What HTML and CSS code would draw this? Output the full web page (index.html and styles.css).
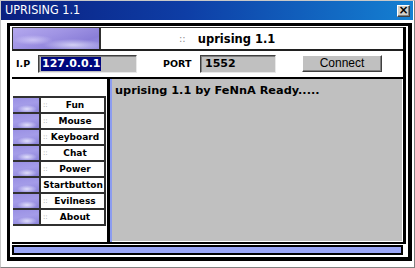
FILE: index.html
```html
<!DOCTYPE html>
<html>
<head>
<meta charset="utf-8">
<link rel="stylesheet" href="styles.css">
</head>
<body>
<div class="window">
  <div class="titlebar">
    <span class="title">UPRISING 1.1</span>
    <span class="close">×</span>
  </div>
  <div class="client">
    <div class="frame">
      <div class="content">
        <div class="header">
          <div class="logo"></div>
          <div class="htitle"><span class="dots">::</span><span class="hname">uprising 1.1</span></div>
        </div>
        <div class="connrow">
          <span class="lbl ip-lbl">I.P</span>
          <div class="field ip-field"><span class="sel">127.0.0.1</span></div>
          <span class="lbl port-lbl">PORT</span>
          <div class="field port-field">1552</div>
          <div class="btn">Connect</div>
        </div>
        <div class="body">
          <div class="menu">
            <div class="mlist">
              <div class="mrow"><div class="mimg"></div><div class="mlabel"><span class="mdots">::</span><span class="mname">Fun</span></div></div>
              <div class="mrow"><div class="mimg"></div><div class="mlabel"><span class="mdots">::</span><span class="mname">Mouse</span></div></div>
              <div class="mrow"><div class="mimg"></div><div class="mlabel"><span class="mdots">::</span><span class="mname">Keyboard</span></div></div>
              <div class="mrow"><div class="mimg"></div><div class="mlabel"><span class="mdots">::</span><span class="mname">Chat</span></div></div>
              <div class="mrow"><div class="mimg"></div><div class="mlabel"><span class="mdots">::</span><span class="mname">Power</span></div></div>
              <div class="mrow"><div class="mimg"></div><div class="mlabel"><span class="mname full">Startbutton</span></div></div>
              <div class="mrow"><div class="mimg"></div><div class="mlabel"><span class="mdots">::</span><span class="mname">Evilness</span></div></div>
              <div class="mrow"><div class="mimg"></div><div class="mlabel"><span class="mdots">::</span><span class="mname">About</span></div></div>
            </div>
          </div>
          <div class="log">uprising 1.1 by FeNnA Ready.....</div>
        </div>
      </div>
      <div class="status"><div class="statusfill"></div></div>
    </div>
  </div>
</div>
</body>
</html>
```

FILE: styles.css
```css
* { box-sizing: border-box; }
html, body { margin: 0; padding: 0; background: #ffffff; }

.window {
  width: 415px;
  height: 268px;
  border: 1px solid;
  border-color: #c8c8c8 #808080 #808080 #c8c8c8;
  background: #ffffff;
  display: flex;
  flex-direction: column;
}

.titlebar {
  height: 19px;
  flex: none;
  margin-right: 1px;
  background: linear-gradient(to right, #0a1f80 0%, #0e3ea6 45%, #1480d2 100%);
  display: flex;
  align-items: center;
  justify-content: space-between;
  padding: 0 3px 0 4px;
}
.title {
  color: #ffffff;
  font-family: "DejaVu Sans Condensed", "Liberation Sans", sans-serif;
  font-size: 12.5px;
  line-height: 1;
}
.close {
  width: 13px;
  height: 12px;
  background: #d4d0c8;
  border: 1px solid;
  border-color: #ffffff #404040 #404040 #ffffff;
  box-shadow: inset -1px -1px #808080;
  color: #000;
  font-family: "DejaVu Sans", sans-serif;
  font-weight: bold;
  font-size: 12px;
  line-height: 9px;
  text-align: center;
}

.client {
  flex: 1;
  display: flex;
  padding: 3px 2px 6px 6px;
  background: #ffffff;
}

.frame {
  flex: 1;
  display: flex;
  flex-direction: column;
  border: solid #000;
  border-width: 3px 4px 4px 3px;
  padding: 1px 2px 2px 2px;
  background: #ffffff;
}

.content {
  flex: 1;
  display: flex;
  flex-direction: column;
  border-right: 3px solid #000;
  border-bottom: 2px solid #000;
}

.header {
  height: 24px;
  flex: none;
  display: flex;
  border-top: 1px solid #303030;
  border-left: 1px solid #303030;
  border-bottom: 2px solid #202020;
}
.logo {
  width: 88px;
  border-right: 2px solid #303030;
  background:
    radial-gradient(ellipse 30px 6px at 60px 17px, rgba(235,235,255,0.75), rgba(235,235,255,0) 100%),
    radial-gradient(ellipse 20px 5px at 20px 12px, rgba(230,225,255,0.6), rgba(230,225,255,0) 100%),
    linear-gradient(160deg, #b4a8ee 0%, #a094e4 40%, #8a7ed8 75%, #9c94e6 100%);
}
.htitle {
  flex: 1;
  display: flex;
  align-items: center;
  padding-left: 78px;
  font-family: "DejaVu Sans", sans-serif;
  font-weight: bold;
  font-size: 11.5px;
  color: #000;
}
.dots {
  color: #909090;
  font-weight: normal;
  font-size: 10px;
  margin-right: 12px;
}

.connrow {
  height: 26px;
  flex: none;
  display: flex;
  align-items: flex-start;
  padding-top: 4px;
}
.lbl {
  font-family: "DejaVu Sans", sans-serif;
  font-weight: bold;
  font-size: 9.5px;
  color: #000;
  line-height: 18px;
}
.ip-lbl { margin-left: 4px; width: 22px; }
.port-lbl { margin-left: 26px; width: 37px; }
.field {
  height: 18px;
  background: #c0c0c0;
  border: 1px solid;
  border-color: #404040 #e8e8e8 #e8e8e8 #404040;
  box-shadow: inset 1px 1px #808080;
  font-family: "DejaVu Sans", sans-serif;
  font-weight: bold;
  font-size: 11px;
  line-height: 15px;
  padding-left: 2px;
  color: #000;
}
.ip-field { width: 99px; }
.port-field { width: 76px; padding-left: 4px; }
.sel {
  display: inline-block;
  background: #00087e;
  color: #ffffff;
  padding: 0 1px;
  line-height: 14px;
  margin-top: 1px;
}
.btn {
  margin-left: 26px;
  width: 80px;
  height: 17px;
  background: #c0c0c0;
  border: 1px solid;
  border-color: #ffffff #404040 #404040 #ffffff;
  box-shadow: inset -1px -1px #808080;
  font-family: "Liberation Sans", Arial, sans-serif;
  font-size: 12px;
  line-height: 14px;
  text-align: center;
  color: #000;
}

.body {
  flex: 1;
  display: flex;
  border-top: 2px solid #000;
}
.menu {
  width: 95px;
  padding: 17px 1px 0 1px;
}
.mlist {
  display: flex;
  flex-direction: column;
  gap: 2px;
  background: #303030;
  border-top: 2px solid #303030;
  border-bottom: 2px solid #303030;
  border-right: 2px solid #303030;
}
.mrow {
  height: 14px;
  display: flex;
  gap: 2px;
}
.mimg {
  width: 26px;
  background:
    radial-gradient(ellipse 10px 4px at 14px 11px, rgba(236,236,255,0.85), rgba(236,236,255,0) 100%),
    linear-gradient(170deg, #9a90e4 0%, #a49ce8 45%, #8c84da 100%);
}
.mlabel {
  flex: 1;
  background: #ffffff;
  display: grid;
  grid-template-columns: 6px 1fr 3px;
  align-items: center;
  padding-left: 2px;
  font-family: "DejaVu Sans", sans-serif;
  font-weight: bold;
  font-size: 9px;
  color: #000;
}
.mdots {
  grid-column: 1;
  font-weight: normal;
  font-size: 7px;
  color: #909090;
}
.mname {
  grid-column: 2;
  text-align: center;
  white-space: nowrap;
}
.mname.full {
  grid-column: 1 / -1;
  margin-left: -1px;
}

.log {
  flex: 1;
  background: #c0c0c0;
  border-left: 3px solid #000;
  box-shadow: inset 2px 0 #8c9cf0, inset -1px -1px #ffffff;
  padding: 5px 4px 0 5px;
  font-family: "DejaVu Sans", sans-serif;
  font-weight: bold;
  font-size: 11.3px;
  color: #000;
}

.status {
  height: 10px;
  flex: none;
  margin-top: 1px;
  margin-right: 3px;
  border: 2px solid #000;
}
.statusfill {
  height: 100%;
  background: #9aa6f6;
}
```
